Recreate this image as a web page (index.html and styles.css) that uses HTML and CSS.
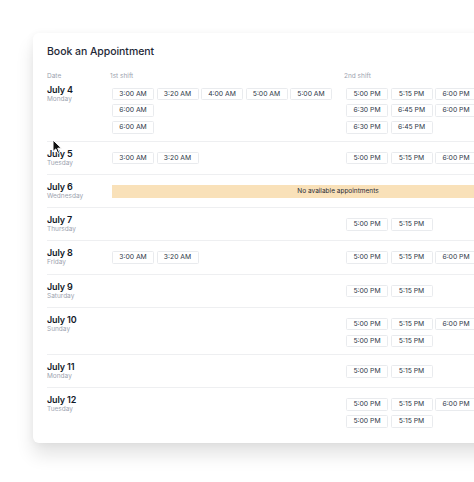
FILE: index.html
```html
<!DOCTYPE html>
<html lang="en">
<head>
<meta charset="utf-8">
<title>Book an Appointment</title>
<link rel="stylesheet" href="styles.css">
</head>
<body>
<div class="viewport">
  <div class="card">
    <h1 class="title">Book an Appointment</h1>
    <div class="table">
      <div class="head">
        <span>Date</span><span class="shift-label">1st shift</span><span class="shift-label">2nd shift</span>
      </div>

      <div class="day first">
        <div class="date"><div class="dname">July 4</div><div class="wday">Monday</div></div>
        <div class="slots">
          <div class="slot-row"><span class="slot">3:00 AM</span><span class="slot">3:20 AM</span><span class="slot">4:00 AM</span><span class="slot">5:00 AM</span><span class="slot">5:00 AM</span></div>
          <div class="slot-row"><span class="slot">6:00 AM</span></div>
          <div class="slot-row"><span class="slot">6:00 AM</span></div>
        </div>
        <div class="slots">
          <div class="slot-row"><span class="slot">5:00 PM</span><span class="slot">5:15 PM</span><span class="slot">6:00 PM</span></div>
          <div class="slot-row"><span class="slot">6:30 PM</span><span class="slot">6:45 PM</span><span class="slot">6:00 PM</span></div>
          <div class="slot-row"><span class="slot">6:30 PM</span><span class="slot">6:45 PM</span></div>
        </div>
      </div>

      <div class="day">
        <div class="date"><div class="dname">July 5</div><div class="wday">Tuesday</div></div>
        <div class="slots">
          <div class="slot-row"><span class="slot">3:00 AM</span><span class="slot">3:20 AM</span></div>
        </div>
        <div class="slots">
          <div class="slot-row"><span class="slot">5:00 PM</span><span class="slot">5:15 PM</span><span class="slot">6:00 PM</span></div>
        </div>
      </div>

      <div class="day">
        <div class="date"><div class="dname">July 6</div><div class="wday">Wednesday</div></div>
        <div class="banner">No available appointments</div>
      </div>

      <div class="day">
        <div class="date"><div class="dname">July 7</div><div class="wday">Thursday</div></div>
        <div class="slots"></div>
        <div class="slots">
          <div class="slot-row"><span class="slot">5:00 PM</span><span class="slot">5:15 PM</span></div>
        </div>
      </div>

      <div class="day">
        <div class="date"><div class="dname">July 8</div><div class="wday">Friday</div></div>
        <div class="slots">
          <div class="slot-row"><span class="slot">3:00 AM</span><span class="slot">3:20 AM</span></div>
        </div>
        <div class="slots">
          <div class="slot-row"><span class="slot">5:00 PM</span><span class="slot">5:15 PM</span><span class="slot">6:00 PM</span></div>
        </div>
      </div>

      <div class="day">
        <div class="date"><div class="dname">July 9</div><div class="wday">Saturday</div></div>
        <div class="slots"></div>
        <div class="slots">
          <div class="slot-row"><span class="slot">5:00 PM</span><span class="slot">5:15 PM</span></div>
        </div>
      </div>

      <div class="day">
        <div class="date"><div class="dname">July 10</div><div class="wday">Sunday</div></div>
        <div class="slots"></div>
        <div class="slots">
          <div class="slot-row"><span class="slot">5:00 PM</span><span class="slot">5:15 PM</span><span class="slot">6:00 PM</span></div>
          <div class="slot-row"><span class="slot">5:00 PM</span><span class="slot">5:15 PM</span></div>
        </div>
      </div>

      <div class="day">
        <div class="date"><div class="dname">July 11</div><div class="wday">Monday</div></div>
        <div class="slots"></div>
        <div class="slots">
          <div class="slot-row"><span class="slot">5:00 PM</span><span class="slot">5:15 PM</span></div>
        </div>
      </div>

      <div class="day">
        <div class="date"><div class="dname">July 12</div><div class="wday">Tuesday</div></div>
        <div class="slots"></div>
        <div class="slots">
          <div class="slot-row"><span class="slot">5:00 PM</span><span class="slot">5:15 PM</span><span class="slot">6:00 PM</span></div>
          <div class="slot-row"><span class="slot">5:00 PM</span><span class="slot">5:15 PM</span></div>
        </div>
      </div>
    </div>
  </div>
  <svg class="cursor" width="12" height="16" viewBox="0 0 12 16" aria-hidden="true">
    <path d="M1 1 L1 12.5 L3.8 9.9 L5.8 14.4 L7.6 13.6 L5.7 9.2 L9.4 9.2 Z" fill="#111" stroke="#fff" stroke-width="1" stroke-linejoin="round"/>
  </svg>
</div>
</body>
</html>
```

FILE: styles.css
```css
* { box-sizing: border-box; }

html, body {
  margin: 0;
  padding: 0;
  background: #ffffff;
}

body {
  font-family: Inter, "Noto Sans", "Liberation Sans", sans-serif;
  color: #1f2937;
}

.viewport {
  position: relative;
  width: 474px;
  height: 482px;
  overflow: hidden;
  padding: 33px 0 0 33px;
}

.card {
  width: 620px;
  background: #ffffff;
  border-radius: 6px;
  padding: 10.5px 0 8.5px 14px;
  box-shadow: 0 12px 18px rgba(0, 0, 0, 0.11), 0 1px 8px rgba(0, 0, 0, 0.05);
}

.title {
  margin: 0;
  font-size: 10.5px;
  line-height: 16px;
  font-weight: 500;
  letter-spacing: -0.05px;
  color: #1f2937;
}

.table {
  margin-top: 12px;
}

.head {
  display: grid;
  grid-template-columns: 63px 234px 1fr;
  font-size: 6.5px;
  line-height: 9px;
  color: #9ca3af;
}

.day {
  display: grid;
  grid-template-columns: 63px 234px 1fr;
  align-items: start;
  padding: 7px 0 7.2px;
  border-top: 1px solid #eeeff1;
}

.day.first {
  border-top: none;
  padding-top: 4px;
}

.dname {
  font-size: 9px;
  line-height: 10px;
  font-weight: 600;
  letter-spacing: -0.15px;
  color: #111827;
}

.wday {
  font-size: 6.5px;
  line-height: 8px;
  color: #9ca3af;
}

.slots {
  display: flex;
  flex-direction: column;
  gap: 4.3px;
  margin-top: 3px;
  padding-left: 2px;
}

.slot-row {
  display: flex;
  gap: 2.5px;
}

.slot {
  width: 42px;
  height: 12.5px;
  border: 1px solid #e9ebee;
  border-radius: 1.5px;
  background: #ffffff;
  font-size: 6.8px;
  line-height: 10.5px;
  text-align: center;
  color: #2d3748;
  flex: none;
}

.banner {
  grid-column: 2 / 4;
  margin: 3px 0 0 2px;
  width: 452px;
  height: 13px;
  background: #f9e1b9;
  font-size: 6.5px;
  line-height: 13px;
  text-align: center;
  color: #1f2937;
}

.cursor {
  position: absolute;
  left: 52px;
  top: 139px;
}
```
